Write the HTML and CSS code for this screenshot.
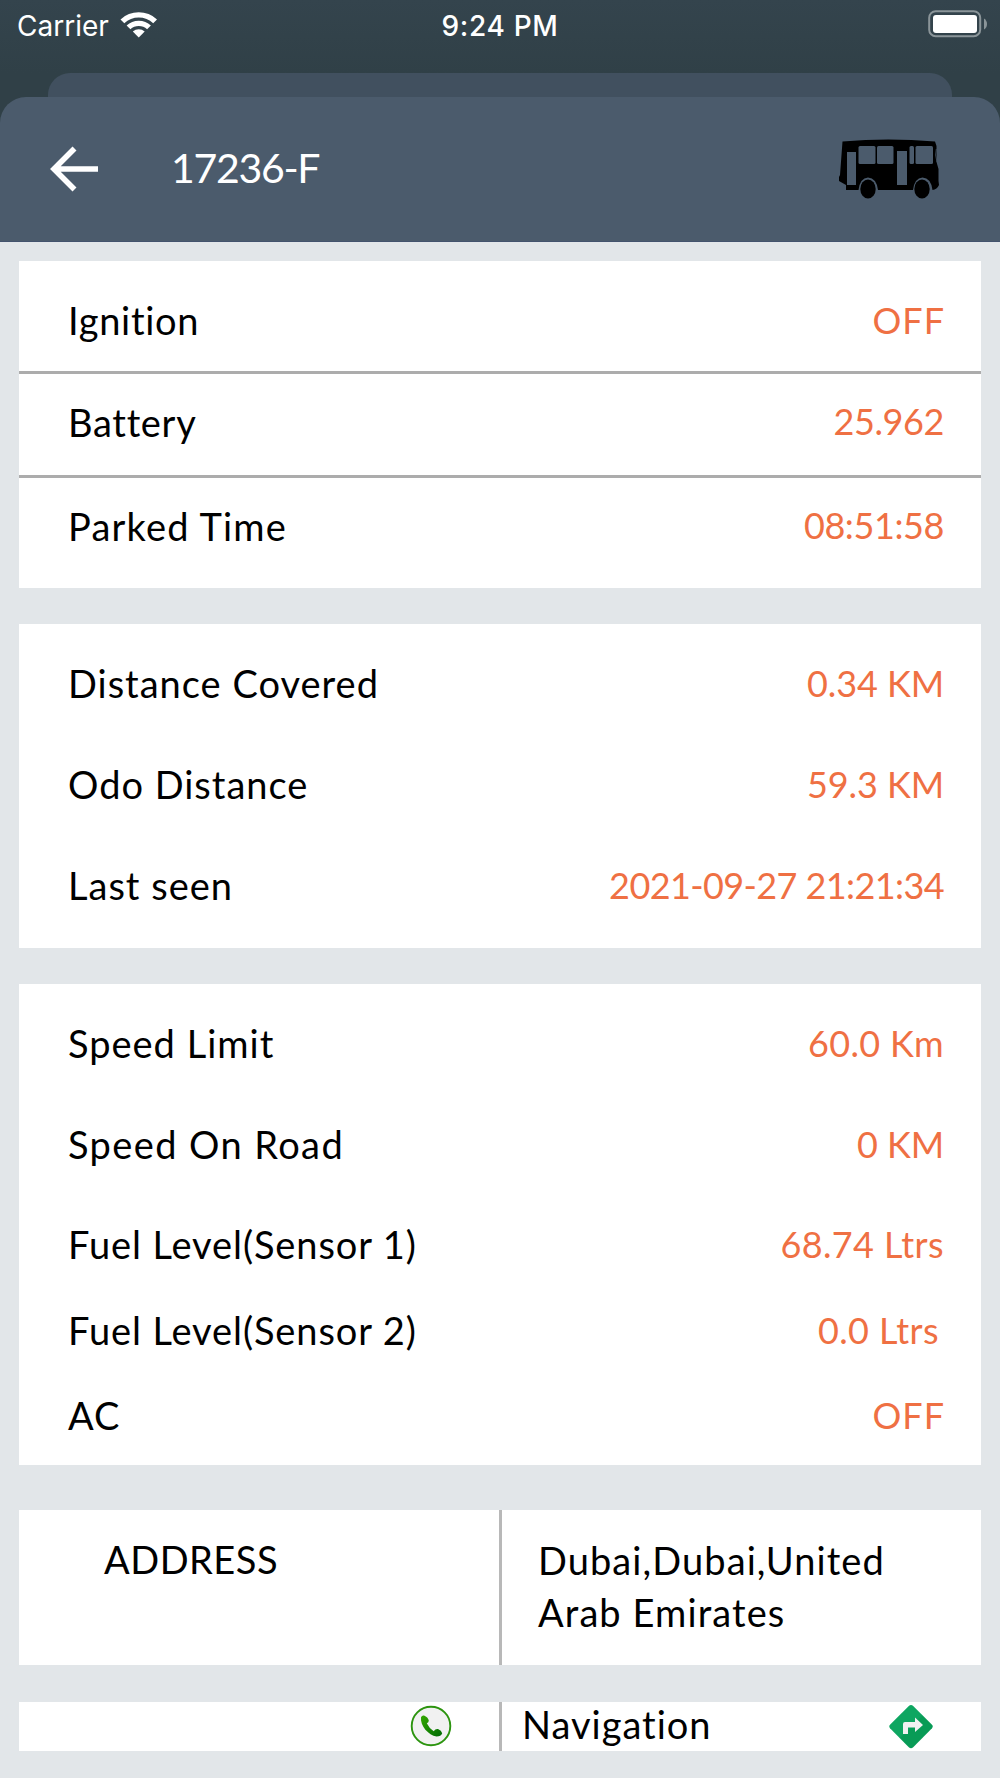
FILE: index.html
```html
<!DOCTYPE html>
<html lang="en">
<head>
<meta charset="UTF-8" />
<meta name="viewport" content="width=device-width, initial-scale=1" />
<title>Vehicle Details</title>
<link rel="stylesheet" href="styles.css">
</head>
<body>

<div class="status-bar">
  <div class="carrier">
    <span>Carrier</span>
    <svg class="wifi" width="38" height="28" viewBox="0 0 38 28">
      <path d="M.5 9.500A26.500 26.500 0 0 1 37 9.500L33.200 13.300A21 21 0 0 0 4.300 13.300Z" fill="#fff"/>
      <path d="M6.600 15.500A17.800 17.800 0 0 1 30.900 15.500L27.100 19.300A12.300 12.300 0 0 0 10.400 19.300Z" fill="#fff"/>
      <path d="M12.800 21.600A9 9 0 0 1 24.700 21.600L18.750 27.500Z" fill="#fff"/>
    </svg>
  </div>
  <div class="time">9:24 PM</div>
  <svg class="battery" width="60" height="28" viewBox="0 0 60 28">
    <rect x="1.200" y="1.200" width="51" height="25" rx="6.500" fill="none" stroke="#8b9599" stroke-width="2"/>
    <rect x="5" y="5" width="44" height="18" rx="3" fill="#fff"/>
    <path d="M56 8.500Q59 10.500 59 14T56 19.500Z" fill="#8b9599"/>
  </svg>
</div>

<div class="back-sheet"></div>

<div class="sheet">
  <div class="header">
    <svg class="back" width="50" height="46" viewBox="0 0 50 46">
      <path d="M25.500 2.500L5 23L25.500 43.500M5 23H49" fill="none" stroke="#fff" stroke-width="5.600"/>
    </svg>
    <div class="title">17236-F</div>
    <svg class="bus" width="102" height="60" viewBox="0 0 102 60">
      <path d="M4.500 2.500Q50-1.500 97 2.500L98.500 7V23L100.500 30V42L101 46Q99 50.500 94.500 51Q93 39 84.500 38.500Q76.500 39 75 51H40Q38.500 39 30 38.500Q22 39 20.500 51H8V46L1 42V38L2 36Z" fill="#000"/>
      <path d="M9 13H18V46H9ZM59 12H69V46H59Z" fill="#4b5b6c"/>
      <rect x="20.500" y="7" width="17" height="18" rx="1.500" fill="#4b5b6c"/>
      <rect x="39" y="7" width="16.500" height="18" rx="1.500" fill="#4b5b6c"/>
      <rect x="71.500" y="7" width="4.500" height="18" rx="1.500" fill="#4b5b6c"/>
      <rect x="77.500" y="7" width="17.500" height="18" rx="1.500" fill="#4b5b6c"/>
      <path d="M98.300 10L97.500 16L99 23" fill="none" stroke="#4b5b6c" stroke-width=".7"/>
      <ellipse cx="30" cy="50" rx="7.700" ry="9.500"/>
      <ellipse cx="84" cy="50" rx="7.700" ry="9.500"/>
    </svg>
  </div>

  <div class="content">
    <div class="card status">
      <div class="row first"><span class="label tight">Ignition</span><span class="value off">OFF</span></div>
      <div class="row second"><span class="label tight">Battery</span><span class="value number">25.962</span></div>
      <div class="row third"><span class="label parked">Parked Time</span><span class="value number">08:51:58</span></div>
    </div>

    <div class="card distance">
      <div class="row"><span class="label">Distance Covered</span><span class="value km">0.34 KM</span></div>
      <div class="row"><span class="label">Odo Distance</span><span class="value km">59.3 KM</span></div>
      <div class="row"><span class="label">Last seen</span><span class="value number date">2021-09-27 21:21:34</span></div>
    </div>

    <div class="card speed">
      <div class="row"><span class="label">Speed Limit</span><span class="value limit">60.0 Km</span></div>
      <div class="row"><span class="label road">Speed On Road</span><span class="value km">0 KM</span></div>
      <div class="row sensor1"><span class="label fuel">Fuel Level(Sensor 1)</span><span class="value ltrs">68.74 Ltrs</span></div>
      <div class="row small"><span class="label fuel">Fuel Level(Sensor 2)</span><span class="value ltrs sensor2">0.0 Ltrs</span></div>
      <div class="row small"><span class="label">AC</span><span class="value off">OFF</span></div>
    </div>

    <div class="card split address">
      <div class="half address-title">ADDRESS</div>
      <div class="half address-text">Dubai,Dubai,United<br>Arab Emirates</div>
    </div>

    <div class="card split actions">
      <div class="half call">
        <svg width="42" height="42" viewBox="0 0 42 42">
          <defs>
            <linearGradient id="phone" x1="0" y1="0" x2="1" y2="1"><stop offset="0" stop-color="#34a800"/><stop offset="1" stop-color="#006a05"/></linearGradient>
          </defs>
          <circle cx="21" cy="21" r="19.300" fill="#f1f1f1" stroke="#2c940f" stroke-width="1.900"/>
          <path d="M11 12.200Q12 10 14 10.500Q18 12 18.800 15.500Q18.800 17.400 16.800 18.300Q19.300 23.500 23.700 26.300Q25.500 23.500 28 24Q31.500 25.500 32.200 28.300Q31 31.500 26.500 31.500C18.500 30 10 21 11 12.200Z" fill="url(#phone)"/>
        </svg>
      </div>
      <div class="half navigation">
        <span class="nav-label">Navigation</span>
        <svg width="44" height="46" viewBox="0 0 44 46">
          <defs>
            <linearGradient id="sign" x1="0" y1="0" x2="1" y2="1"><stop offset=".48" stop-color="#0ea661"/><stop offset=".52" stop-color="#089b56"/></linearGradient>
          </defs>
          <path d="M19.800 2Q22 0 24.200 2L43 20.800Q44.500 22.500 43 24.200L24.200 43.300Q22 45.300 19.800 43.300L1 24.200Q-.5 22.500 1 20.800Z" fill="url(#sign)"/>
          <path d="M14 30V20Q14 18 16 18H26V13.500L34 21L26 28V23.500H19V30Z" fill="#f1f1f1"/>
        </svg>
      </div>
    </div>
  </div>
</div>

</body>
</html>
```
FILE: styles.css
```css
* {
  box-sizing: border-box;
}
body {
  margin: 0;
  height: 1778px;
  overflow: hidden;
  background: #304047;
  color: #000;
  font-family: Lato, sans-serif;
  display: flex;
  flex-direction: column;
}
.status-bar {
  height: 73px;
  flex: none;
  padding: 0 17px 22px;
  display: grid;
  grid-template-columns: 1fr auto 1fr;
  align-items: center;
  background: linear-gradient(#34444d, #304047);
  color: #fff;
  font-family: Inter, sans-serif;
  font-size: 28px;
}
.carrier {
  display: flex;
  align-items: center;
  gap: 11px;
}
.wifi {
  margin-bottom: 4px;
}
.time {
  font-weight: 500;
  letter-spacing: 0.7px;
}
.battery {
  justify-self: end;
  margin: 0 -5px 3px 0;
}
.back-sheet {
  height: 24px;
  flex: none;
  margin: 0 48px;
  border-radius: 22px 22px 0 0;
  background: #41505f;
}
.sheet {
  flex: 1;
  display: flex;
  flex-direction: column;
}
.header {
  height: 145px;
  flex: none;
  padding: 0 60px 0 49px;
  display: flex;
  align-items: center;
  background: #4b5b6c;
  border-radius: 26px 26px 0 0;
  border-bottom: 1px solid #43536d;
}
.title {
  margin-left: 72px;
  padding-bottom: 4px;
  flex: 1;
  color: #fff;
  font-size: 41px;
  letter-spacing: -1.3px;
}
.content {
  flex: 1;
  padding: 19px 19px 0;
  background: #e2e6e9;
}
.card {
  background: #fff;
  margin-bottom: 36px;
}
.row {
  height: 101px;
  padding: 0 37px 0 49px;
  display: flex;
  align-items: center;
  justify-content: space-between;
}
.label {
  font-size: 38px;
  letter-spacing: 1px;
}
.label.tight {
  letter-spacing: 0.7px;
}
.label.fuel {
  letter-spacing: 0.9px;
}
.label.parked {
  letter-spacing: 1.2px;
}
.label.road {
  letter-spacing: 1.4px;
}
.value {
  font-size: 36px;
  letter-spacing: 1px;
  color: #ef7043;
}
.value.off {
  margin-right: -1px;
}
.value.number {
  letter-spacing: -0.4px;
}
.value.date {
  letter-spacing: -0.6px;
}
.value.km {
  letter-spacing: -0.1px;
}
.value.limit {
  letter-spacing: 0.3px;
}
.value.ltrs {
  letter-spacing: 0.4px;
}
.status .row {
  border-bottom: 3px solid #acacac;
}
.status .first {
  height: 113px;
  padding-top: 8px;
}
.status .second {
  height: 104px;
  padding-bottom: 5px;
}
.status .third {
  height: 110px;
  padding-bottom: 15px;
  border-bottom: none;
}
.second .value,
.third .value {
  padding-bottom: 2px;
}
.distance {
  height: 324px;
  padding-top: 8px;
}
.speed {
  height: 481px;
  padding-top: 8px;
  margin-bottom: 45px;
}
.speed .sensor1 {
  height: 93px;
  padding-top: 7px;
}
.speed .small {
  height: 85px;
}
.value.sensor2 {
  margin-right: 5px;
}
.split {
  display: flex;
}
.half {
  width: 480px;
}
.half + .half {
  width: 482px;
  border-left: 3px solid #b8b8b8;
}
.address {
  height: 155px;
  margin-bottom: 37px;
  font-size: 38px;
  line-height: 52px;
}
.address-title {
  padding: 23px 0 0 85px;
  letter-spacing: 0.5px;
}
.address-text {
  padding: 24px 0 0 36px;
  letter-spacing: 1.1px;
}
.actions {
  height: 49px;
}
.call {
  display: flex;
  align-items: center;
  justify-content: flex-end;
  padding: 0 47px 2px 0;
}
.navigation {
  display: flex;
  align-items: center;
  justify-content: space-between;
  padding: 0 48px 0 20px;
  font-size: 38px;
  letter-spacing: 1px;
}
.nav-label {
  padding-bottom: 6px;
}
```
